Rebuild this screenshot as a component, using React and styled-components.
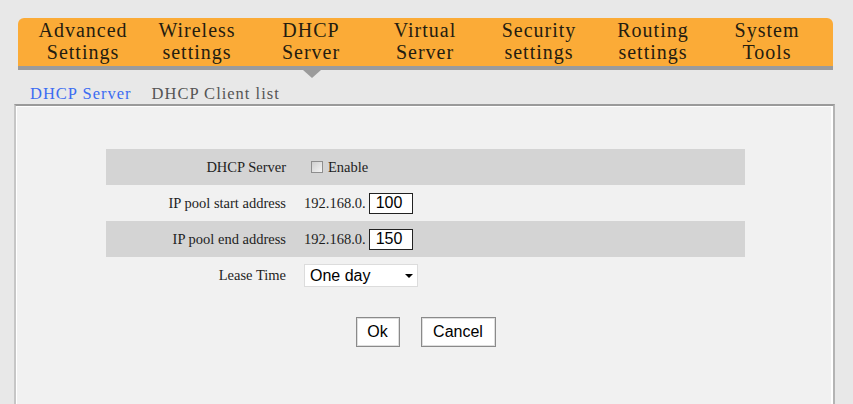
import React from 'react';
import styled, { createGlobalStyle } from 'styled-components';

const GlobalStyle = createGlobalStyle`
  html, body {
    margin: 0;
    padding: 0;
    background: #e8e8e8;
    overflow: hidden;
  }
  body {
    font-family: "Liberation Serif", "Times New Roman", serif;
  }
`;

const Page = styled.div`
  width: 853px;
  height: 404px;
  padding-top: 18px;
  box-sizing: border-box;
`;

const Nav = styled.ul`
  display: flex;
  margin: 0 20px 0 18px;
  padding: 1px 0 0 8px;
  box-sizing: border-box;
  list-style: none;
  height: 52px;
  background: #fbab37;
  border-bottom: 4px solid #9b9b9b;
  border-radius: 6px 6px 0 0;
`;

const NavItem = styled.li`
  position: relative;
  flex: none;
  width: 114px;
  text-align: center;
  font-size: 20px;
  line-height: 22px;
  letter-spacing: 1px;
  color: #241c10;
  cursor: pointer;

  ${(p) =>
    p.$active &&
    `
    &::after {
      content: '';
      position: absolute;
      left: 50%;
      top: 51px;
      margin-left: -8px;
      border-left: 9px solid transparent;
      border-right: 9px solid transparent;
      border-top: 8px solid #9b9b9b;
    }
  `}
`;

const SubTabs = styled.div`
  display: flex;
  gap: 20px;
  height: 34px;
  box-sizing: border-box;
  padding: 14px 0 0 30px;
`;

const SubTab = styled.span`
  font-size: 16.5px;
  line-height: 20px;
  letter-spacing: 1px;
  color: ${(p) => (p.$active ? '#3c6cf2' : '#555')};
  cursor: pointer;
`;

const Panel = styled.div`
  margin: 0 18px 0 14px;
  height: 320px;
  background: #f1f1f1;
  border-top: 2px solid #9a9a9a;
  border-left: 2px solid #c6c6c6;
  border-right: 2px solid #b4b4b4;
  box-shadow: inset 1px 1px 0 #fff, inset -2px 0 0 #fff;
  padding: 43px 0 0 2px;
  box-sizing: border-box;
`;

const Form = styled.div`
  width: 639px;
  margin: 0 auto;
`;

const Row = styled.div`
  display: flex;
  align-items: center;
  height: 36px;
  background: ${(p) => (p.$shaded ? '#d4d4d4' : 'transparent')};
`;

const Label = styled.div`
  width: 190px;
  padding-right: 10px;
  box-sizing: border-box;
  text-align: right;
  font-size: 14.5px;
  color: #1e1e1e;
`;

const Value = styled.div`
  display: flex;
  align-items: center;
  padding-left: 8px;
  font-size: 14.5px;
  color: #1e1e1e;
`;

const Check = styled.input`
  appearance: none;
  width: 12px;
  height: 12px;
  margin: 0 5px 0 7px;
  border: 1px solid #8e8e8e;
  background: linear-gradient(135deg, #cfcfcf, #f4f4f4);
  box-sizing: border-box;
`;

const IpInput = styled.input`
  width: 44px;
  height: 21px;
  margin-left: 3px;
  padding: 0 0 0 6px;
  box-sizing: border-box;
  border: 1px solid #222;
  border-top-width: 1.5px;
  background: #fff;
  font-family: "Liberation Sans", Arial, sans-serif;
  font-size: 16px;
  color: #000;
  outline: none;
`;

const SelectWrap = styled.span`
  position: relative;
  display: inline-block;

  &::after {
    content: '';
    position: absolute;
    right: 5px;
    top: 10px;
    border-left: 4px solid transparent;
    border-right: 4px solid transparent;
    border-top: 4px solid #000;
    pointer-events: none;
  }
`;

const Select = styled.select`
  appearance: none;
  width: 114px;
  height: 23px;
  padding: 0 0 0 5px;
  border: 1px solid #dcdcdc;
  border-radius: 0;
  background: #fff;
  font-family: "Liberation Sans", Arial, sans-serif;
  font-size: 16px;
  color: #000;
  outline: none;
`;

const Actions = styled.div`
  display: flex;
  justify-content: center;
  gap: 21px;
  margin-top: 24px;
`;

const Button = styled.button`
  height: 30px;
  padding: 0;
  width: ${(p) => p.$w}px;
  background: #fff;
  border: 1px solid #8a8a8a;
  box-shadow: inset 0 0 0 1px #dedede;
  font-family: "Liberation Sans", Arial, sans-serif;
  font-size: 16px;
  color: #000;
  cursor: pointer;
`;

const menu = [
  ['Advanced', 'Settings'],
  ['Wireless', 'settings'],
  ['DHCP', 'Server'],
  ['Virtual', 'Server'],
  ['Security', 'settings'],
  ['Routing', 'settings'],
  ['System', 'Tools'],
];

export default function App() {
  return (
    <Page>
      <GlobalStyle />
      <Nav>
        {menu.map(([a, b]) => (
          <NavItem key={a} $active={a === 'DHCP'}>
            {a}
            <br />
            {b}
          </NavItem>
        ))}
      </Nav>
      <SubTabs>
        <SubTab $active>DHCP Server</SubTab>
        <SubTab>DHCP Client list</SubTab>
      </SubTabs>
      <Panel>
        <Form>
          <Row $shaded>
            <Label>DHCP Server</Label>
            <Value>
              <Check type="checkbox" />
              Enable
            </Value>
          </Row>
          <Row>
            <Label>IP pool start address</Label>
            <Value>
              192.168.0.
              <IpInput defaultValue="100" />
            </Value>
          </Row>
          <Row $shaded>
            <Label>IP pool end address</Label>
            <Value>
              192.168.0.
              <IpInput defaultValue="150" />
            </Value>
          </Row>
          <Row>
            <Label>Lease Time</Label>
            <Value>
              <SelectWrap>
                <Select defaultValue="day">
                  <option value="hour">One hour</option>
                  <option value="day">One day</option>
                  <option value="week">One week</option>
                </Select>
              </SelectWrap>
            </Value>
          </Row>
        </Form>
        <Actions>
          <Button $w={44}>Ok</Button>
          <Button $w={75}>Cancel</Button>
        </Actions>
      </Panel>
    </Page>
  );
}
